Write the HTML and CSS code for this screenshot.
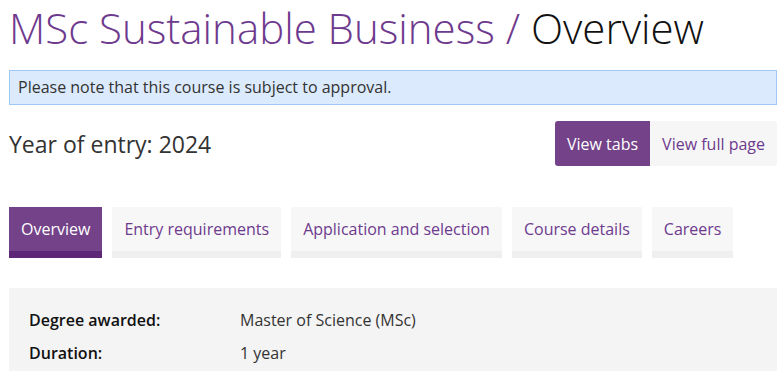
FILE: index.html
```html
<!DOCTYPE html>
<html lang="en">
<head>
<meta charset="utf-8">
<title>MSc Sustainable Business / Overview</title>
<link rel="stylesheet" href="styles.css">
</head>
<body>
<div class="page">
  <h1 class="title"><span class="crumb">MSc Sustainable Business /</span> Overview</h1>
  <div class="notice">Please note that this course is subject to approval.</div>
  <div class="entry-row">
    <h2 class="entry">Year of entry: 2024</h2>
    <div class="view-toggle">
      <a class="toggle active" href="#">View tabs</a>
      <a class="toggle" href="#">View full page</a>
    </div>
  </div>
  <ul class="tabs">
    <li class="tab active"><a href="#">Overview</a></li>
    <li class="tab"><a href="#">Entry requirements</a></li>
    <li class="tab"><a href="#">Application and selection</a></li>
    <li class="tab"><a href="#">Course details</a></li>
    <li class="tab"><a href="#">Careers</a></li>
  </ul>
  <div class="facts">
    <dl class="fact-list">
      <dt>Degree awarded:</dt><dd>Master of Science (MSc)</dd>
      <dt>Duration:</dt><dd>1 year</dd>
    </dl>
  </div>
</div>
</body>
</html>
```

FILE: styles.css
```css
* { box-sizing: border-box; }
html, body { margin: 0; padding: 0; background: #fff; }
body {
  font-family: "Open Sans", "Liberation Sans", sans-serif;
  color: #333;
  font-size: 16px;
}
.page {
  width: 768px;
  margin-left: 9px;
}
.title {
  margin: 0;
  padding-top: 0;
  font-weight: 300;
  font-size: 42px;
  line-height: 56px;
  color: #111;
  white-space: nowrap;
}
.crumb { color: #6e3a8e; }
.notice {
  margin-top: 14px;
  height: 35px;
  padding: 0 8px;
  line-height: 33px;
  background: #dbeafc;
  border: 1px solid #9fc8f4;
  color: #333;
  font-size: 16px;
}
.entry-row {
  margin-top: 16px;
  display: flex;
  justify-content: space-between;
  align-items: center;
}
.entry {
  margin: 0;
  font-weight: 400;
  font-size: 23px;
  color: #333;
}
.view-toggle {
  display: flex;
  border-radius: 3px;
  overflow: hidden;
  background: #f6f6f6;
}
.toggle {
  display: block;
  height: 45px;
  line-height: 46px;
  padding: 0 12px;
  text-decoration: none;
  color: #6e3a8e;
  font-size: 16px;
}
.toggle.active {
  background: #734289;
  color: #fff;
}
.tabs {
  list-style: none;
  margin: 41px 0 0;
  padding: 0;
  display: flex;
  gap: 10px;
}
.tab a {
  display: block;
  height: 51px;
  padding: 0 12px 7px;
  line-height: 45px;
  background: #f7f7f7;
  border-bottom: 7px solid #efefef;
  color: #6e3a8e;
  text-decoration: none;
  font-size: 16px;
}
.tab.active a {
  background: #734289;
  border-bottom-color: #5d2677;
  color: #fff;
}
.facts {
  margin-top: 30px;
  background: #f4f4f4;
  padding: 20px 20px 20px;
  min-height: 90px;
}
.fact-list {
  margin: 0;
  display: grid;
  grid-template-columns: 211px 1fr;
  row-gap: 9px;
  line-height: 24px;
}
.fact-list dt {
  font-weight: 600;
  color: #111;
}
.fact-list dd {
  margin: 0;
  color: #333;
}
```
